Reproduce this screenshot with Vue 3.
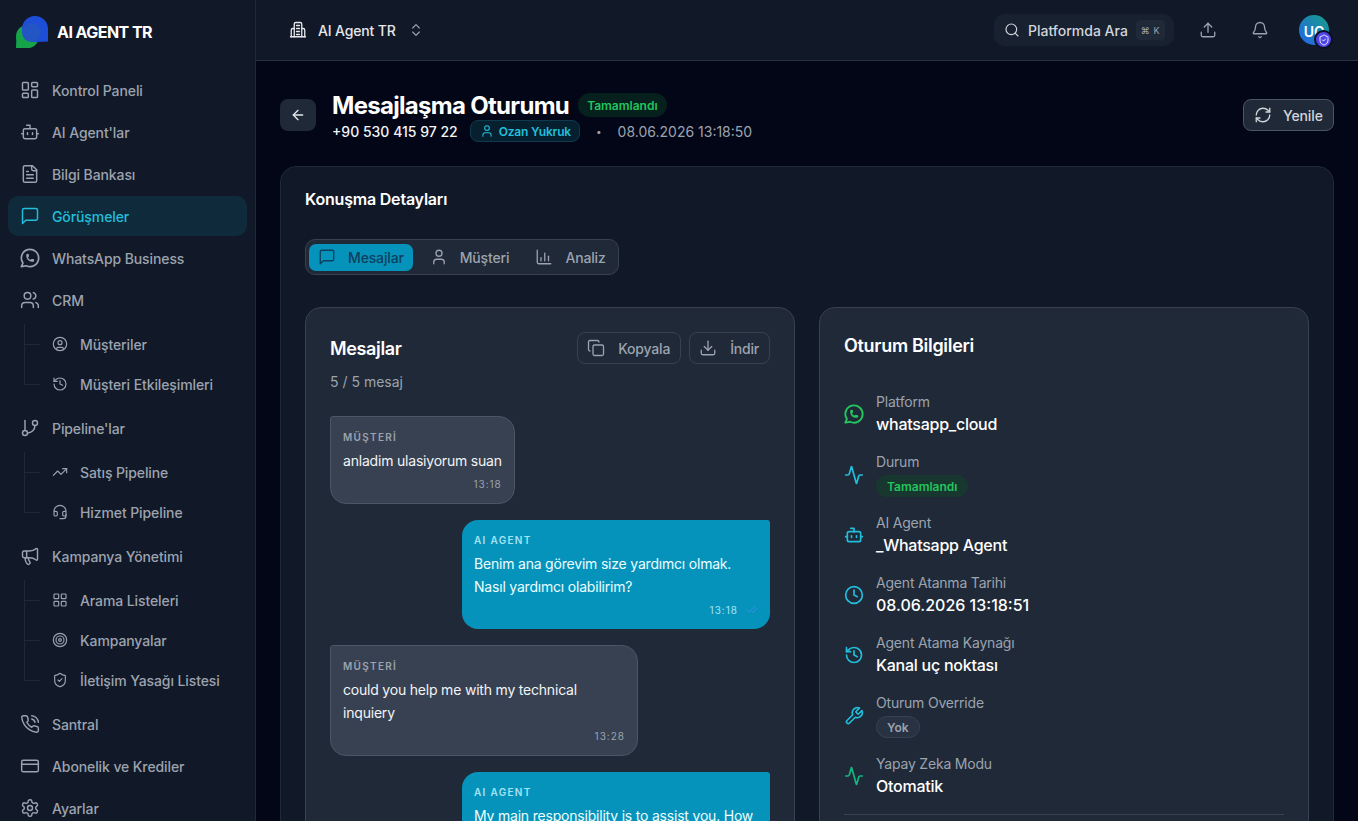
<script setup>
const icons = {
  dashboard: '<rect x="3" y="3" width="7" height="9" rx="1"/><rect x="14" y="3" width="7" height="5" rx="1"/><rect x="14" y="12" width="7" height="9" rx="1"/><rect x="3" y="16" width="7" height="5" rx="1"/>',
  bot: '<path d="M12 8V4H8"/><rect width="16" height="12" x="4" y="8" rx="2"/><path d="M2 14h2"/><path d="M20 14h2"/><path d="M15 13v2"/><path d="M9 13v2"/>',
  file: '<path d="M15 2H6a2 2 0 0 0-2 2v16a2 2 0 0 0 2 2h12a2 2 0 0 0 2-2V7Z"/><path d="M14 2v4a2 2 0 0 0 2 2h4"/><path d="M10 9H8"/><path d="M16 13H8"/><path d="M16 17H8"/>',
  message: '<path d="M21 15a2 2 0 0 1-2 2H7l-4 4V5a2 2 0 0 1 2-2h14a2 2 0 0 1 2 2z"/>',
  whatsapp: '<g transform="translate(12 12) scale(1.15) translate(-12 -12)"><path d="M3 21l1.65-3.8a9 9 0 1 1 3.4 2.9l-5.05.9"/><path d="M9 10a.5.5 0 0 0 1 0v-1a.5.5 0 0 0-1 0v1a5 5 0 0 0 5 5h1a.5.5 0 0 0 0-1h-1a.5.5 0 0 0 0 1"/></g>',
  users: '<path d="M16 21v-2a4 4 0 0 0-4-4H6a4 4 0 0 0-4 4v2"/><circle cx="9" cy="7" r="4"/><path d="M22 21v-2a4 4 0 0 0-3-3.87"/><path d="M16 3.13a4 4 0 0 1 0 7.75"/>',
  circleUser: '<circle cx="12" cy="12" r="10"/><circle cx="12" cy="10" r="3"/><path d="M7 20.662V19a2 2 0 0 1 2-2h6a2 2 0 0 1 2 2v1.662"/>',
  history: '<path d="M3 12a9 9 0 1 0 9-9 9.75 9.75 0 0 0-6.74 2.74L3 8"/><path d="M3 3v5h5"/><path d="M12 7v5l4 2"/>',
  branch: '<line x1="6" x2="6" y1="3" y2="15"/><circle cx="18" cy="6" r="3"/><circle cx="6" cy="18" r="3"/><path d="M18 9a9 9 0 0 1-9 9"/>',
  trend: '<polyline points="22 7 13.5 15.5 8.5 10.5 2 17"/><polyline points="16 7 22 7 22 13"/>',
  headset: '<path d="M3 11h3a2 2 0 0 1 2 2v3a2 2 0 0 1-2 2H5a2 2 0 0 1-2-2v-5Zm0 0a9 9 0 1 1 18 0m0 0v5a2 2 0 0 1-2 2h-1a2 2 0 0 1-2-2v-3a2 2 0 0 1 2-2h3Z"/><path d="M21 16v2a4 4 0 0 1-4 4h-5"/>',
  megaphone: '<path d="M11 6a13 13 0 0 0 8.4-2.8A1 1 0 0 1 21 4v12a1 1 0 0 1-1.6.8A13 13 0 0 0 11 14H5a2 2 0 0 1-2-2V8a2 2 0 0 1 2-2z"/><path d="M6 14a12 12 0 0 0 2.4 7.2 2 2 0 0 0 3.2-2.4A8 8 0 0 1 10 14"/><path d="M8 6v8"/>',
  grid: '<rect width="7" height="7" x="3" y="3" rx="1"/><rect width="7" height="7" x="14" y="3" rx="1"/><rect width="7" height="7" x="14" y="14" rx="1"/><rect width="7" height="7" x="3" y="14" rx="1"/>',
  target: '<circle cx="12" cy="12" r="10"/><circle cx="12" cy="12" r="6"/><circle cx="12" cy="12" r="2"/>',
  shield: '<path d="M20 13c0 5-3.5 7.5-7.66 8.95a1 1 0 0 1-.67-.01C7.5 20.5 4 18 4 13V6a1 1 0 0 1 1-1c2 0 4.5-1.2 6.24-2.72a1.17 1.17 0 0 1 1.52 0C14.51 3.81 17 5 19 5a1 1 0 0 1 1 1z"/><path d="m9 12 2 2 4-4"/>',
  phone: '<path d="M22 16.92v3a2 2 0 0 1-2.18 2 19.79 19.79 0 0 1-8.63-3.07 19.5 19.5 0 0 1-6-6 19.79 19.79 0 0 1-3.07-8.67A2 2 0 0 1 4.11 2h3a2 2 0 0 1 2 1.72 12.84 12.84 0 0 0 .7 2.81 2 2 0 0 1-.45 2.11L8.09 9.91a16 16 0 0 0 6 6l1.27-1.27a2 2 0 0 1 2.11-.45 12.84 12.84 0 0 0 2.81.7A2 2 0 0 1 22 16.92z"/><path d="M14.05 2a9 9 0 0 1 8 7.94"/><path d="M14.05 6A5 5 0 0 1 18 10"/>',
  card: '<rect width="20" height="14" x="2" y="5" rx="2"/><line x1="2" x2="22" y1="10" y2="10"/>',
  settings: '<path d="M12.22 2h-.44a2 2 0 0 0-2 2v.18a2 2 0 0 1-1 1.73l-.43.25a2 2 0 0 1-2 0l-.15-.08a2 2 0 0 0-2.73.73l-.22.38a2 2 0 0 0 .73 2.73l.15.1a2 2 0 0 1 1 1.72v.51a2 2 0 0 1-1 1.74l-.15.09a2 2 0 0 0-.73 2.73l.22.38a2 2 0 0 0 2.73.73l.15-.08a2 2 0 0 1 2 0l.43.25a2 2 0 0 1 1 1.73V20a2 2 0 0 0 2 2h.44a2 2 0 0 0 2-2v-.18a2 2 0 0 1 1-1.73l.43-.25a2 2 0 0 1 2 0l.15.08a2 2 0 0 0 2.73-.73l.22-.39a2 2 0 0 0-.73-2.73l-.15-.08a2 2 0 0 1-1-1.74v-.5a2 2 0 0 1 1-1.74l.15-.09a2 2 0 0 0 .73-2.73l-.22-.38a2 2 0 0 0-2.73-.73l-.15.08a2 2 0 0 1-2 0l-.43-.25a2 2 0 0 1-1-1.73V4a2 2 0 0 0-2-2z"/><circle cx="12" cy="12" r="3"/>',
  search: '<circle cx="11" cy="11" r="8"/><path d="m21 21-4.3-4.3"/>',
  upload: '<path d="M21 15v4a2 2 0 0 1-2 2H5a2 2 0 0 1-2-2v-4"/><polyline points="17 8 12 3 7 8"/><line x1="12" x2="12" y1="3" y2="15"/>',
  bell: '<path d="M10.268 21a2 2 0 0 0 3.464 0"/><path d="M3.262 15.326A1 1 0 0 0 4 17h16a1 1 0 0 0 .74-1.673C19.41 13.956 18 12.499 18 8A6 6 0 0 0 6 8c0 4.499-1.411 5.956-2.738 7.326"/>',
  building: '<path d="M7 21V4a2 2 0 0 1 2-2h6a2 2 0 0 1 2 2v17"/><path d="M7 10H5a2 2 0 0 0-2 2v9"/><path d="M17 10h2a2 2 0 0 1 2 2v9"/><path d="M2 21h20"/><path d="M10 6h4"/><path d="M10 10h4"/><path d="M10 14h4"/><path d="M10 18h4"/>',
  updown: '<path d="m7 15 5 5 5-5"/><path d="m7 9 5-5 5 5"/>',
  back: '<path d="m12 19-7-7 7-7"/><path d="M19 12H5"/>',
  refresh: '<path d="M3 12a9 9 0 0 1 9-9 9.75 9.75 0 0 1 6.74 2.74L21 8"/><path d="M21 3v5h-5"/><path d="M21 12a9 9 0 0 1-9 9 9.75 9.75 0 0 1-6.74-2.74L3 16"/><path d="M8 16H3v5"/>',
  user: '<path d="M19 21v-2a4 4 0 0 0-4-4H9a4 4 0 0 0-4 4v2"/><circle cx="12" cy="7" r="4"/>',
  chart: '<path d="M3 3v16a2 2 0 0 0 2 2h16"/><path d="M18 17v-6"/><path d="M13 17V7"/><path d="M8 17v-4"/>',
  copy: '<rect width="14" height="14" x="8" y="8" rx="2"/><path d="M4 16c-1.1 0-2-.9-2-2V4c0-1.1.9-2 2-2h10c1.1 0 2 .9 2 2"/>',
  download: '<path d="M21 15v4a2 2 0 0 1-2 2H5a2 2 0 0 1-2-2v-4"/><polyline points="7 10 12 15 17 10"/><line x1="12" x2="12" y1="15" y2="3"/>',
  activity: '<path d="M22 12h-2.48a2 2 0 0 0-1.93 1.46l-2.35 8.36a.25.25 0 0 1-.48 0L9.24 2.18a.25.25 0 0 0-.48 0l-2.35 8.36A2 2 0 0 1 4.49 12H2"/>',
  clock: '<circle cx="12" cy="12" r="10"/><polyline points="12 6 12 12 16 14"/>',
  wrench: '<path d="M14.7 6.3a1 1 0 0 0 0 1.4l1.6 1.6a1 1 0 0 0 1.4 0l3.77-3.77a6 6 0 0 1-7.94 7.94l-6.91 6.91a2.12 2.12 0 0 1-3-3l6.91-6.91a6 6 0 0 1 7.94-7.94l-3.76 3.76z"/>',
  checks: '<path d="M18 6 7 17l-5-5"/><path d="m22 10-7.5 7.5L13 16"/>'
}

const nav = [
  { label: 'Kontrol Paneli', icon: 'dashboard' },
  { label: "AI Agent'lar", icon: 'bot' },
  { label: 'Bilgi Bankası', icon: 'file' },
  { label: 'Görüşmeler', icon: 'message', active: true },
  { label: 'WhatsApp Business', icon: 'whatsapp' },
  {
    label: 'CRM',
    icon: 'users',
    children: [
      { label: 'Müşteriler', icon: 'circleUser' },
      { label: 'Müşteri Etkileşimleri', icon: 'history' }
    ]
  },
  {
    label: "Pipeline'lar",
    icon: 'branch',
    children: [
      { label: 'Satış Pipeline', icon: 'trend' },
      { label: 'Hizmet Pipeline', icon: 'headset' }
    ]
  },
  {
    label: 'Kampanya Yönetimi',
    icon: 'megaphone',
    children: [
      { label: 'Arama Listeleri', icon: 'grid' },
      { label: 'Kampanyalar', icon: 'target' },
      { label: 'İletişim Yasağı Listesi', icon: 'shield' }
    ]
  },
  { label: 'Santral', icon: 'phone' },
  { label: 'Abonelik ve Krediler', icon: 'card' },
  { label: 'Ayarlar', icon: 'settings' }
]

const tabs = [
  { label: 'Mesajlar', icon: 'message', active: true },
  { label: 'Müşteri', icon: 'user' },
  { label: 'Analiz', icon: 'chart' }
]

const messages = [
  { from: 'customer', text: 'anladim ulasiyorum suan', time: '13:18' },
  { from: 'agent', text: 'Benim ana görevim size yardımcı olmak. Nasıl yardımcı olabilirim?', time: '13:18' },
  { from: 'customer', text: 'could you help me with my technical inquiery', time: '13:28' },
  { from: 'agent', text: 'My main responsibility is to assist you. How can I help you today?', time: '13:28' }
]

const details = [
  { label: 'Platform', value: 'whatsapp_cloud', icon: 'whatsapp', tone: 'green' },
  { label: 'Durum', badge: 'Tamamlandı', badgeClass: 'badge-done', icon: 'activity', tone: 'cyan' },
  { label: 'AI Agent', value: '_Whatsapp Agent', icon: 'bot', tone: 'cyan' },
  { label: 'Agent Atanma Tarihi', value: '08.06.2026 13:18:51', numeric: true, icon: 'clock', tone: 'cyan' },
  { label: 'Agent Atama Kaynağı', value: 'Kanal uç noktası', icon: 'history', tone: 'cyan' },
  { label: 'Oturum Override', badge: 'Yok', badgeClass: 'badge-none', icon: 'wrench', tone: 'cyan' },
  { label: 'Yapay Zeka Modu', value: 'Otomatik', icon: 'activity', tone: 'teal' }
]
</script>

<template>
  <div class="app">
    <aside class="sidebar">
      <div class="brand">
        <svg class="logo" viewBox="0 0 32 32">
          <circle cx="11.500" cy="20.500" r="11.500" fill="#16a34a" />
          <path d="M0 32 L0.500 20 L12 32 Z" fill="#16a34a" />
          <circle cx="19" cy="13" r="13" fill="#1d4ed8" />
          <path d="M32 25.500 L19 26 L32 12 Z" fill="#1d4ed8" />
          <circle cx="15.500" cy="16.500" r="9.500" fill="#2455c4" />
        </svg>
        <span class="brand-name">AI AGENT TR</span>
      </div>
      <nav class="nav">
        <template v-for="item in nav" :key="item.label">
          <a class="nav-item" :class="{ active: item.active }">
            <svg class="icon nav-icon" viewBox="0 0 24 24" v-html="icons[item.icon]"></svg>
            <span>{{ item.label }}</span>
          </a>
          <div v-if="item.children" class="sub-list">
            <a v-for="child in item.children" :key="child.label" class="sub-item">
              <svg class="icon sub-icon" viewBox="0 0 24 24" v-html="icons[child.icon]"></svg>
              <span>{{ child.label }}</span>
            </a>
          </div>
        </template>
      </nav>
    </aside>

    <div class="main">
      <header class="topbar">
        <div class="tenant">
          <svg class="icon tenant-icon" viewBox="0 0 24 24" v-html="icons.building"></svg>
          <span class="tenant-name">AI Agent TR</span>
          <svg class="icon updown" viewBox="0 0 24 24" v-html="icons.updown"></svg>
        </div>
        <div class="top-actions">
          <div class="search">
            <svg class="icon search-icon" viewBox="0 0 24 24" v-html="icons.search"></svg>
            <span class="search-text">Platformda Ara</span>
            <kbd class="kbd">⌘ K</kbd>
          </div>
          <svg class="icon top-icon upload-icon" viewBox="0 0 24 24" v-html="icons.upload"></svg>
          <svg class="icon top-icon bell-icon" viewBox="0 0 24 24" v-html="icons.bell"></svg>
          <div class="avatar">
            <span class="avatar-text">UC</span>
            <span class="avatar-badge">
              <svg class="icon badge-icon" viewBox="0 0 24 24" v-html="icons.shield"></svg>
            </span>
          </div>
        </div>
      </header>

      <main class="content">
        <div class="page-head">
          <div class="head-left">
            <button class="back-btn">
              <svg class="icon back-icon" viewBox="0 0 24 24" v-html="icons.back"></svg>
            </button>
            <div class="head-text">
              <div class="title-row">
                <h1 class="title">Mesajlaşma Oturumu</h1>
                <span class="status-pill">Tamamlandı</span>
              </div>
              <div class="meta-row">
                <span class="phone">+90 530 415 97 22</span>
                <span class="person">
                  <svg class="icon person-icon" viewBox="0 0 24 24" v-html="icons.user"></svg>
                  Ozan Yukruk
                </span>
                <span class="dot">•</span>
                <span class="date">08.06.2026 13:18:50</span>
              </div>
            </div>
          </div>
          <button class="refresh-btn">
            <svg class="icon refresh-icon" viewBox="0 0 24 24" v-html="icons.refresh"></svg>
            Yenile
          </button>
        </div>

        <section class="panel">
          <h2 class="panel-title">Konuşma Detayları</h2>
          <div class="tabs">
            <button v-for="tab in tabs" :key="tab.label" class="tab" :class="{ active: tab.active }">
              <svg class="icon tab-icon" viewBox="0 0 24 24" v-html="icons[tab.icon]"></svg>
              {{ tab.label }}
            </button>
          </div>

          <div class="columns">
            <div class="card">
              <div class="card-head">
                <h3 class="card-title">Mesajlar</h3>
                <div class="card-actions">
                  <button class="ghost-btn">
                    <svg class="icon ghost-icon" viewBox="0 0 24 24" v-html="icons.copy"></svg>
                    Kopyala
                  </button>
                  <button class="ghost-btn">
                    <svg class="icon ghost-icon" viewBox="0 0 24 24" v-html="icons.download"></svg>
                    İndir
                  </button>
                </div>
              </div>
              <p class="count">5 / 5 mesaj</p>
              <div class="thread">
                <div v-for="(msg, i) in messages" :key="i" class="bubble" :class="msg.from">
                  <div class="bubble-label">{{ msg.from === 'agent' ? 'AI AGENT' : 'MÜŞTERİ' }}</div>
                  <div class="bubble-text">{{ msg.text }}</div>
                  <div class="bubble-foot">
                    <span>{{ msg.time }}</span>
                    <svg v-if="msg.from === 'agent'" class="icon read-icon" viewBox="0 0 24 24" v-html="icons.checks"></svg>
                  </div>
                </div>
              </div>
            </div>

            <div class="card">
              <h3 class="info-title">Oturum Bilgileri</h3>
              <div class="info-list">
                <div v-for="row in details" :key="row.label" class="info-row">
                  <svg class="icon info-icon" :class="row.tone" viewBox="0 0 24 24" v-html="icons[row.icon]"></svg>
                  <div class="info-body">
                    <div class="info-label">{{ row.label }}</div>
                    <div v-if="row.value" class="info-value" :class="{ numeric: row.numeric }">{{ row.value }}</div>
                    <span v-else class="info-badge" :class="row.badgeClass">{{ row.badge }}</span>
                  </div>
                </div>
              </div>
              <div class="info-divider"></div>
            </div>
          </div>
        </section>
      </main>
    </div>
  </div>
</template>

<style>
html,
body {
  margin: 0;
  background: #030617;
  overflow: hidden;
}
</style>

<style scoped>
.app {
  display: flex;
  height: 821px;
  overflow: hidden;
  font-family: Inter, "Liberation Sans", sans-serif;
  color: #fff;
  background: #030617;
}

.icon {
  fill: none;
  stroke: currentColor;
  stroke-width: 1.75;
  stroke-linecap: round;
  stroke-linejoin: round;
  flex-shrink: 0;
}

/* sidebar */
.sidebar {
  width: 255px;
  flex-shrink: 0;
  background: #111827;
  border-right: 1px solid #1f2937;
  overflow: hidden;
}

.brand {
  display: flex;
  align-items: center;
  gap: 9px;
  height: 64px;
  padding-left: 16px;
  margin-bottom: 6px;
}

.logo {
  width: 32px;
  height: 32px;
}

.brand-name {
  font-size: 16px;
  font-weight: 700;
  letter-spacing: -0.55px;
}

.nav {
  display: flex;
  flex-direction: column;
  gap: 2px;
  padding: 0 8px;
}

.nav-item {
  display: flex;
  align-items: center;
  gap: 12px;
  height: 40px;
  padding-left: 12px;
  border-radius: 10px;
  font-size: 14px;
  font-weight: 500;
  letter-spacing: -0.1px;
  color: #9ca3af;
  flex-shrink: 0;
}

.nav-item.active {
  background: #0e2a3b;
  color: #22bfdc;
}

.nav-icon {
  width: 20px;
  height: 20px;
}

.sub-list {
  display: flex;
  flex-direction: column;
  position: relative;
  margin: 2px 0;
}

.sub-list::before {
  content: "";
  position: absolute;
  left: 16px;
  top: 0;
  bottom: 20px;
  border-left: 1px solid #1f2937;
}

.sub-item {
  display: flex;
  align-items: center;
  gap: 12px;
  height: 40px;
  padding-left: 44px;
  font-size: 14px;
  font-weight: 500;
  letter-spacing: -0.1px;
  color: #9ca3af;
  position: relative;
}

.sub-item::before {
  content: "";
  position: absolute;
  left: 16px;
  top: 50%;
  width: 16px;
  border-top: 1px solid #1f2937;
}

.sub-icon {
  width: 16px;
  height: 16px;
}

/* topbar */
.main {
  flex: 1;
  min-width: 0;
  display: flex;
  flex-direction: column;
}

.topbar {
  height: 60px;
  flex-shrink: 0;
  display: flex;
  align-items: center;
  justify-content: space-between;
  padding: 0 24px 0 33px;
  background: #111827;
  border-bottom: 1px solid #283242;
}

.tenant {
  display: flex;
  align-items: center;
  color: #e5e7eb;
}

.tenant-icon {
  width: 18px;
  height: 18px;
  margin-right: 11px;
}

.tenant-name {
  font-size: 14px;
  font-weight: 500;
  letter-spacing: -0.15px;
}

.updown {
  width: 16px;
  height: 16px;
  margin-left: 12px;
  color: #9ca3af;
}

.top-actions {
  display: flex;
  align-items: center;
}

.search {
  display: flex;
  align-items: center;
  width: 180px;
  height: 32px;
  box-sizing: border-box;
  padding: 0 10px;
  border-radius: 10px;
  background: #172130;
  color: #d1d5db;
}

.search-icon {
  width: 16px;
  height: 16px;
  margin-right: 8px;
}

.search-text {
  font-size: 14px;
  font-weight: 500;
  white-space: nowrap;
}

.kbd {
  margin-left: 8px;
  height: 20px;
  padding: 0 5px;
  display: flex;
  align-items: center;
  border-radius: 4px;
  background: #1f2937;
  color: #9ca3af;
  font-family: Inter, "DejaVu Sans", sans-serif;
  font-size: 9px;
  letter-spacing: 0.5px;
  white-space: nowrap;
}

.top-icon {
  width: 18px;
  height: 18px;
  color: #9ca3af;
}

.upload-icon {
  margin-left: 25px;
}

.bell-icon {
  margin-left: 34px;
}

.avatar {
  position: relative;
  width: 30px;
  height: 30px;
  margin-left: 30px;
  margin-right: 5px;
  border-radius: 50%;
  background: linear-gradient(45deg, #2563eb, #14a085);
  display: flex;
  align-items: center;
  justify-content: center;
}

.avatar-text {
  font-size: 14px;
  font-weight: 600;
  margin-top: 2px;
}

.avatar-badge {
  position: absolute;
  right: -4px;
  bottom: -4px;
  width: 15px;
  height: 15px;
  border: 2px solid #0b1024;
  border-radius: 50%;
  background: #4f46e5;
  display: flex;
  align-items: center;
  justify-content: center;
}

.badge-icon {
  width: 12px;
  height: 12px;
}

/* page header */
.content {
  flex: 1;
  min-height: 0;
  overflow: hidden;
  padding: 31px 24px 0;
}

.page-head {
  display: flex;
  align-items: flex-start;
  justify-content: space-between;
  margin-bottom: 24px;
}

.head-left {
  display: flex;
  gap: 16px;
}

.back-btn {
  width: 36px;
  height: 32px;
  margin-top: 7px;
  padding: 0;
  border: 0;
  border-radius: 8px;
  background: #1f2937;
  color: #e5e7eb;
  display: flex;
  align-items: center;
  justify-content: center;
}

.back-icon {
  width: 16px;
  height: 16px;
  stroke-width: 2;
}

.title-row {
  display: flex;
  align-items: center;
  gap: 9px;
  height: 28px;
}

.title {
  margin: 0;
  font-size: 24px;
  line-height: 28px;
  font-weight: 700;
  letter-spacing: -0.7px;
}

.status-pill {
  height: 24px;
  padding: 0 9px;
  display: flex;
  align-items: center;
  border-radius: 12px;
  background: #05201d;
  color: #22c55e;
  font-size: 12px;
  font-weight: 600;
  margin-top: -2px;
}

.meta-row {
  display: flex;
  align-items: center;
  height: 22px;
  font-size: 14px;
}

.phone {
  font-weight: 500;
  color: #f3f4f6;
}

.person {
  display: flex;
  align-items: center;
  gap: 5px;
  height: 22px;
  box-sizing: border-box;
  margin-left: 12px;
  padding: 0 8px 0 9px;
  border: 1px solid #0f3a4e;
  border-radius: 8px;
  background: #07202f;
  color: #22bfdc;
  font-size: 12px;
  font-weight: 600;
  letter-spacing: -0.2px;
}

.person-icon {
  width: 14px;
  height: 14px;
}

.dot {
  margin-left: 16px;
  color: #9ca3af;
  font-size: 10px;
}

.date {
  margin-left: 16px;
  color: #9ca3af;
}

.refresh-btn {
  display: flex;
  align-items: center;
  gap: 11px;
  width: 91px;
  height: 32px;
  margin-top: 7px;
  box-sizing: border-box;
  padding: 0 10px;
  border: 1px solid #4b5563;
  border-radius: 8px;
  background: #1f2937;
  color: #d1d5db;
  font: 500 14px Inter, sans-serif;
  letter-spacing: -0.1px;
}

.refresh-icon {
  width: 18px;
  height: 18px;
}

/* panel */
.panel {
  box-sizing: border-box;
  padding: 24px;
  border: 1px solid #1f2937;
  border-radius: 16px;
  background: #111827;
}

.panel-title {
  margin: 0 0 31px;
  font-size: 16px;
  line-height: 17px;
  font-weight: 600;
  letter-spacing: -0.2px;
}

.tabs {
  display: inline-flex;
  align-items: center;
  gap: 8px;
  height: 36px;
  box-sizing: border-box;
  padding: 0 3px;
  border: 1px solid #374151;
  border-radius: 10px;
  background: #1f2937;
}

.tab {
  display: flex;
  align-items: center;
  gap: 12px;
  height: 27px;
  padding: 0 9px;
  border: 0;
  border-radius: 7px;
  background: transparent;
  color: #9ca3af;
  font: 500 14px Inter, sans-serif;
  letter-spacing: -0.15px;
}

.tab.active {
  background: #0693bb;
  color: #0c3f5e;
}

.tab-icon {
  width: 18px;
  height: 18px;
}

.columns {
  display: grid;
  grid-template-columns: 1fr 1fr;
  gap: 24px;
  margin-top: 32px;
}

.card {
  box-sizing: border-box;
  padding: 24px;
  border: 1px solid #374151;
  border-radius: 16px;
  background: #1f2937;
  min-width: 0;
}

.card-head {
  display: flex;
  align-items: center;
  justify-content: space-between;
  height: 32px;
}

.card-title {
  margin: 0;
  font-size: 18px;
  font-weight: 600;
  letter-spacing: -0.35px;
}

.card-actions {
  display: flex;
  gap: 8px;
}

.ghost-btn {
  display: flex;
  align-items: center;
  gap: 13px;
  height: 32px;
  padding: 0 10px 0 9px;
  border: 1px solid #374151;
  border-radius: 8px;
  background: transparent;
  color: #9ca3af;
  font: 500 14px Inter, sans-serif;
  letter-spacing: -0.2px;
}

.ghost-icon {
  width: 18px;
  height: 18px;
}

.count {
  margin: 8px 0 0;
  font-size: 14px;
  line-height: 20px;
  color: #9ca3af;
}

/* messages */
.thread {
  display: flex;
  flex-direction: column;
  gap: 16px;
  margin-top: 24px;
}

.bubble {
  box-sizing: border-box;
  max-width: 308px;
  padding: 12px;
  border-radius: 16px;
}

.bubble.customer {
  align-self: flex-start;
  background: #374151;
  border: 1px solid #4b5563;
  border-top-left-radius: 3px;
}

.bubble.agent {
  align-self: flex-end;
  width: 308px;
  background: #0693bb;
  border-top-right-radius: 3px;
}

.bubble-label {
  font-size: 10px;
  line-height: 16px;
  font-weight: 600;
  letter-spacing: 1.3px;
  color: #9ca3af;
}

.agent .bubble-label {
  color: #a5e3f3;
}

.bubble-text {
  margin-top: 4px;
  font-size: 14px;
  line-height: 23px;
  letter-spacing: -0.2px;
  color: #f3f4f6;
}

.agent .bubble-text {
  color: #ecfeff;
}

.bubble-foot {
  display: flex;
  align-items: center;
  justify-content: flex-end;
  gap: 7px;
  margin-top: 4px;
  height: 15px;
  font-size: 10px;
  letter-spacing: 1px;
  color: #9ca3af;
}

.agent .bubble-foot {
  color: #a5e3f3;
}

.read-icon {
  width: 13px;
  height: 13px;
  color: #3b8fe6;
}

/* session info */
.info-title {
  margin: 0;
  font-size: 18px;
  line-height: 28px;
  font-weight: 600;
  letter-spacing: -0.3px;
}

.info-list {
  display: flex;
  flex-direction: column;
  gap: 16px;
  margin-top: 32px;
}

.info-row {
  display: flex;
  align-items: center;
  gap: 12px;
}

.info-icon {
  width: 20px;
  height: 20px;
  stroke-width: 2;
}

.info-icon.green {
  color: #22c55e;
}

.info-icon.cyan {
  color: #22bfdc;
}

.info-icon.teal {
  color: #10b981;
}

.info-label {
  font-size: 14px;
  line-height: 20px;
  letter-spacing: -0.2px;
  color: #9ca3af;
}

.info-value {
  font-size: 16px;
  line-height: 24px;
  font-weight: 500;
  letter-spacing: -0.25px;
}

.info-value.numeric {
  letter-spacing: 0;
}

.info-badge {
  display: flex;
  width: fit-content;
  align-items: center;
  box-sizing: border-box;
  height: 22px;
  margin-top: 3px;
  padding: 0 11px;
  border-radius: 11px;
  font-size: 12px;
  font-weight: 600;
}

.badge-done {
  background: #18382f;
  color: #22c55e;
}

.badge-none {
  background: #283242;
  border: 1px solid #374151;
  padding: 0 10px;
  color: #9ca3af;
}

.info-divider {
  margin-top: 16px;
  border-top: 1px solid #374151;
}
</style>
